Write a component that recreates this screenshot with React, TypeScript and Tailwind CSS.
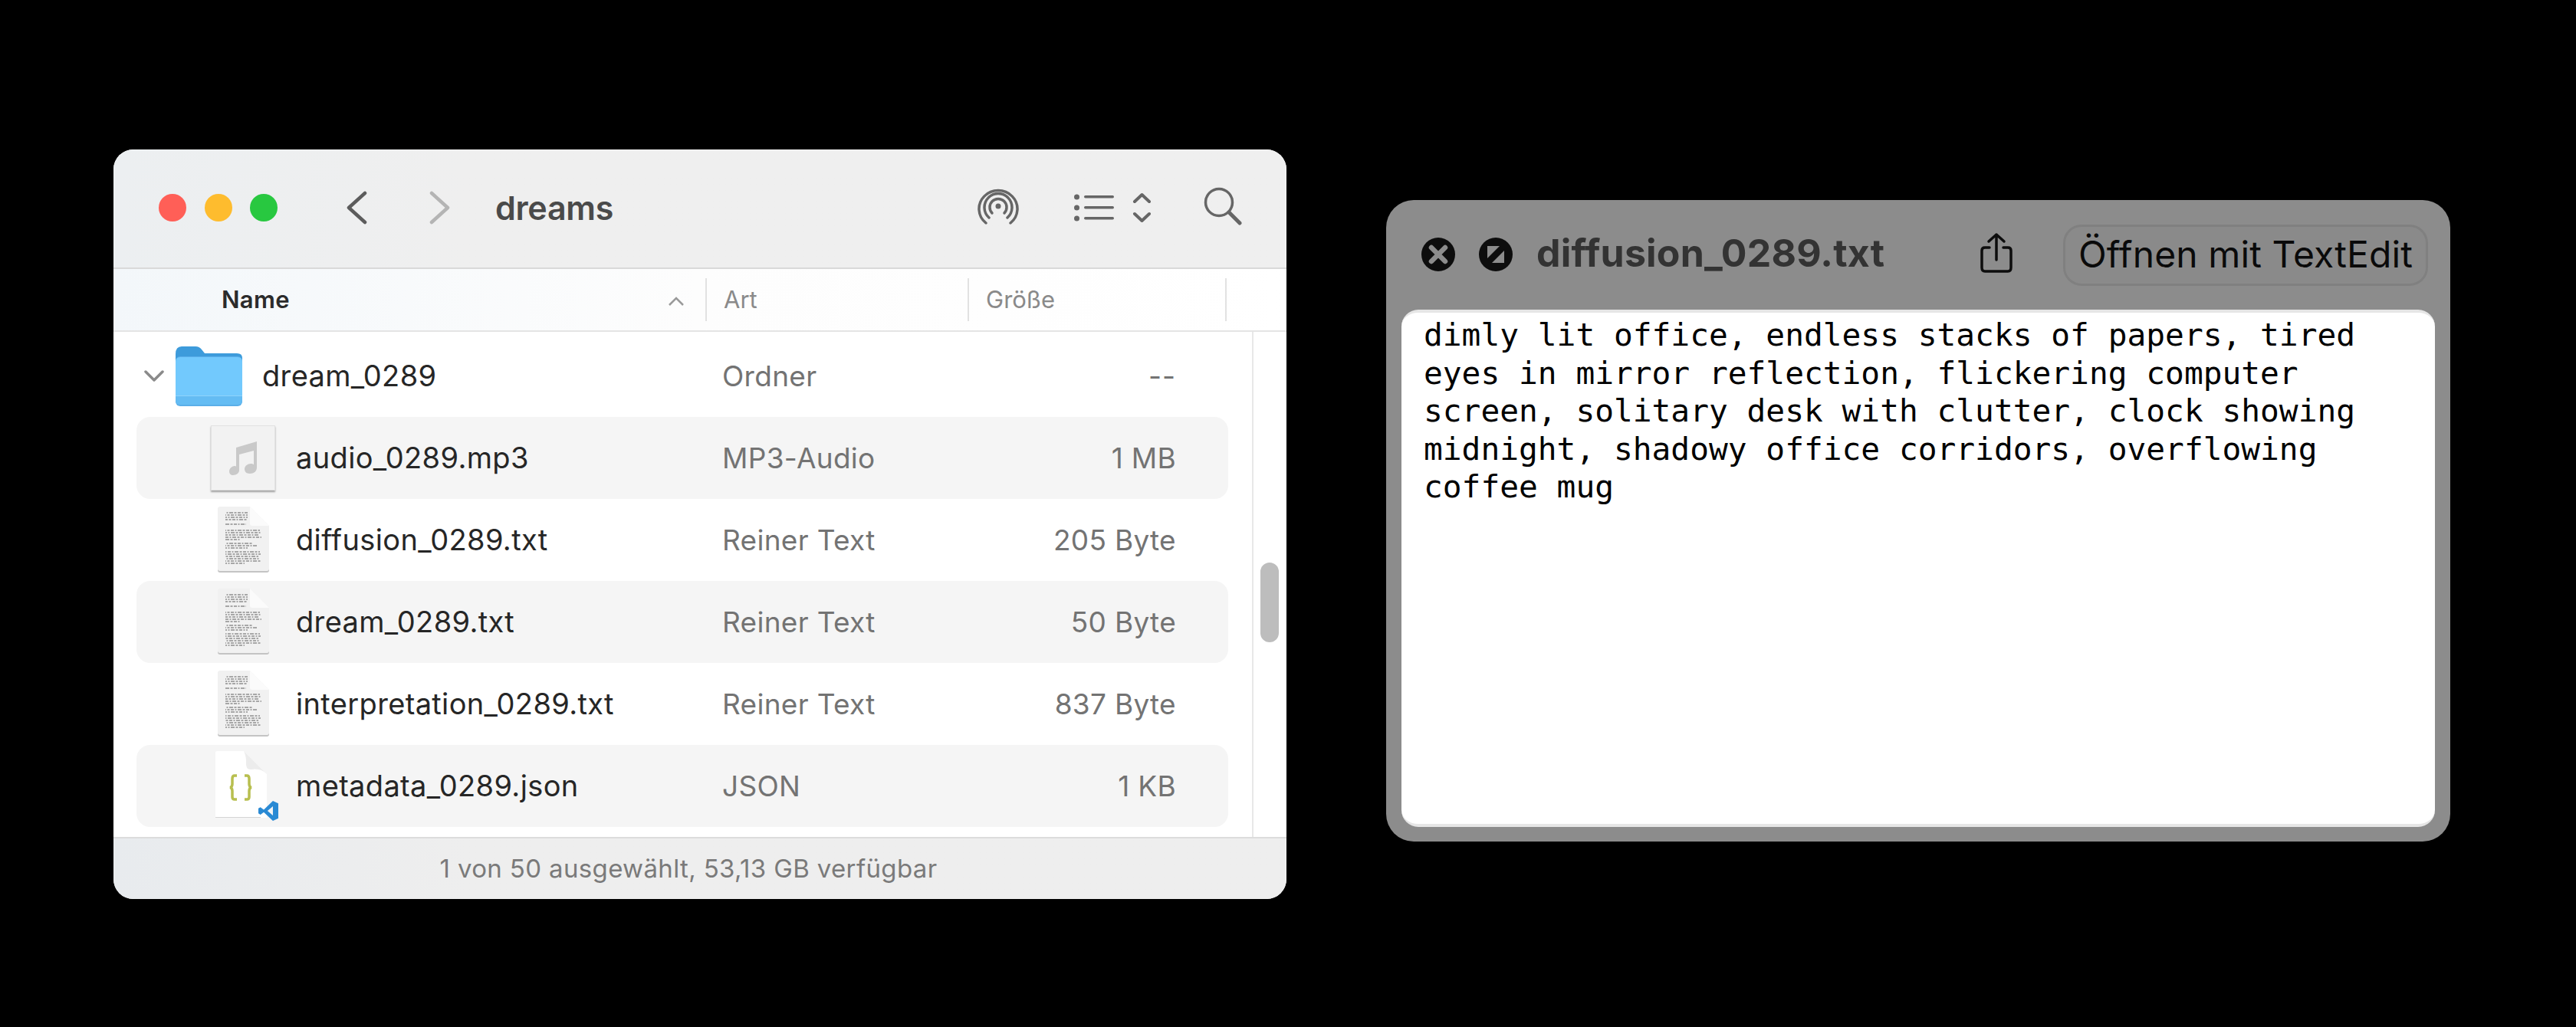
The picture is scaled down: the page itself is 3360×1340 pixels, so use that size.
import React from "react";

const rows = [
  { name: "audio_0289.mp3", kind: "MP3-Audio", size: "1 MB", icon: "audio", striped: true },
  { name: "diffusion_0289.txt", kind: "Reiner Text", size: "205 Byte", icon: "text", striped: false },
  { name: "dream_0289.txt", kind: "Reiner Text", size: "50 Byte", icon: "text", striped: true },
  { name: "interpretation_0289.txt", kind: "Reiner Text", size: "837 Byte", icon: "text", striped: false },
  { name: "metadata_0289.json", kind: "JSON", size: "1 KB", icon: "json", striped: true },
];

const docLines = [
  [8, 11, 40], [11, 11, 40], [14, 11, 40], [17, 11, 40], [23, 11, 38],
  [31, 11, 56], [34, 11, 58], [37, 11, 55], [40, 11, 58], [43, 11, 30],
  [48, 11, 46], [51, 11, 52], [54, 11, 40], [59, 11, 56], [62, 11, 57],
  [65, 11, 54], [68, 11, 56], [71, 11, 57], [74, 11, 36],
];

function FolderIcon() {
  return (
    <svg width="87" height="78" viewBox="0 0 87 78" className="shrink-0">
      <path d="M0 10Q0 0 8 0H26Q31 0 34 4L38 9H80Q87 9 87 15V30H0Z" fill="#3d9bdb" />
      <rect x="0" y="13" width="87" height="65" rx="6" fill="#5aaee8" />
      <path d="M0 20Q0 14 6 14H81Q87 14 87 20V64H0Z" fill="#72c9fd" />
      <rect x="0" y="64" width="87" height="1.5" fill="#8ed3fb" />
      <path d="M0 65H87V70Q87 76 81 76H6Q0 76 0 70Z" fill="#64bcf3" />
    </svg>
  );
}

function AudioIcon() {
  return (
    <div className="w-[84px] h-[85px] shrink-0 flex items-center justify-center bg-[#f2f2f2] border border-[#e2e2e2] shadow-[0_2px_2px_rgba(0,0,0,0.35)]">
      <svg width="36" height="44" viewBox="0 0 36 44" fill="#c9c9c9">
        <path d="M9 8L36 0V34C36 39 32 42 27 42C22 42 20 39 20 36C20 32 24 29 28 29C30 29 31 29.500 32 30V12L13 17V38C13 41 9 44 5 44C2 44 0 42 0 39C0 35 4 32 7 32C8 32 9 32.300 9 33Z" />
      </svg>
    </div>
  );
}

function TextIcon() {
  return (
    <svg width="68" height="87" viewBox="0 0 68 87" className="shrink-0">
      <path d="M1 4Q1 2 4 2H43L68 27V82Q68 85 65 85H4Q1 85 1 82Z" fill="#c4c4c4" transform="translate(0 1)" />
      <path d="M1 3Q1 0 4 0H43L68 25V81Q68 84 65 84H4Q1 84 1 81Z" fill="#f1f1f1" />
      {docLines.map(([y, x1, x2]) => (
        <line
          key={y}
          x1={x1}
          x2={x2}
          y1={y}
          y2={y}
          stroke="#8f8f8f"
          strokeWidth="1.500"
          strokeDasharray="4 1.500 2 1.500 5 1.500 3 1.500"
          strokeDashoffset={y * 3}
        />
      ))}
      <path d="M43 0L68 25H46Q43 25 43 22Z" fill="#fbfbfb" />
    </svg>
  );
}

function JsonIcon() {
  return (
    <div className="relative w-[74px] h-[91px] shrink-0">
      <svg width="68" height="88" viewBox="0 0 68 88">
        <path d="M1 2Q1 0 3 0H38L68 30V87H3Q1 87 1 85Z" fill="#ffffff" />
        <path d="M1 86.500H60" stroke="#d4d4d4" strokeWidth="1" />
        <path d="M38 0L68 30Q60 22 48 24Q40 25 41 14Q41 6 38 0Z" fill="#ececec" />
        <path d="M29 32H26Q23 32 23 36V43Q23 47 20 47.500Q23 48 23 52V60Q23 63 26 63H29" fill="none" stroke="#b8bf4f" strokeWidth="3.500" />
        <path d="M39 32H42Q45 32 45 36V43Q45 47 48 47.500Q45 48 45 52V60Q45 63 42 63H39" fill="none" stroke="#b8bf4f" strokeWidth="3.500" />
      </svg>
      <svg width="26" height="26" viewBox="0 0 24 24" className="absolute right-[-9px] bottom-[0px]">
        <path d="M17.500 0L24 3V21L17.500 24L6.500 13.500L2.500 16.500L0 15V9L2.500 7.500L6.500 10.500ZM17.500 6.500L11 12L17.500 17.500Z" fill="#2a8ad4" />
      </svg>
    </div>
  );
}

function ColumnDivider() {
  return <div className="w-[2px] h-[56px] bg-[#e2e2e2] shrink-0" />;
}

function FileRow({ name, kind, size, icon, striped }: (typeof rows)[number]) {
  return (
    <div className={`h-[107px] flex items-center rounded-[18px] ${striped ? "bg-[#f5f5f5]" : ""}`}>
      <div className="flex items-center justify-center w-[84px] ml-[97px] shrink-0">
        {icon === "audio" && <AudioIcon />}
        {icon === "text" && <TextIcon />}
        {icon === "json" && <JsonIcon />}
      </div>
      <span className="ml-[27px] w-[556px] text-[38px] text-[#262626] tracking-[0.35px]">{name}</span>
      <span className="w-[300px] text-[37px] text-[#737373] tracking-[0.3px]">{kind}</span>
      <span className="w-[292px] text-right text-[37px] text-[#737373] tracking-[0.3px]">{size}</span>
    </div>
  );
}

function FinderWindow() {
  return (
    <div className="w-[1530px] h-[978px] shrink-0 rounded-[26px] overflow-hidden bg-white flex flex-col font-['Inter',sans-serif]">
      <div className="h-[156px] shrink-0 bg-linear-to-r from-[#eceff1] via-[#efefef] via-30% to-[#efefef] border-b-2 border-[#d9d9d9] flex items-center pb-[2px]">
        <div className="w-[36px] h-[36px] ml-[59px] rounded-full bg-[#ff5f57]" />
        <div className="w-[36px] h-[36px] ml-[24px] rounded-full bg-[#febc2e]" />
        <div className="w-[36px] h-[36px] ml-[23px] rounded-full bg-[#28c840]" />
        <svg width="28" height="44" viewBox="0 0 28 44" className="ml-[89px]" fill="none" stroke="#5c5c5c" strokeWidth="4.500" strokeLinecap="round" strokeLinejoin="round">
          <path d="M25 3L4 22L25 41" />
        </svg>
        <svg width="28" height="44" viewBox="0 0 28 44" className="ml-[81px]" fill="none" stroke="#b4b4b4" strokeWidth="4.500" strokeLinecap="round" strokeLinejoin="round">
          <path d="M3 3L24 22L3 41" />
        </svg>
        <span className="ml-[58px] w-[157px] text-[43px] font-semibold text-[#4a4a4a] tracking-[-0.3px]">dreams</span>
        <svg width="54" height="50" viewBox="0 0 54 50" className="ml-[472px] mt-[-6px]" fill="none" stroke="#666666" strokeWidth="3.500" strokeLinecap="round">
          <path d="M11 48A25 24 0 1 1 43 48" />
          <path d="M15 41A18 18 0 1 1 39 41" />
          <path d="M19 35A11 11 0 1 1 35 35" />
          <circle cx="27" cy="26" r="3.500" fill="#666666" stroke="none" />
        </svg>
        <svg width="52" height="36" viewBox="0 0 52 36" className="ml-[72px]" fill="#666666">
          <circle cx="3.500" cy="4" r="3.500" />
          <circle cx="3.500" cy="18" r="3.500" />
          <circle cx="3.500" cy="32" r="3.500" />
          <rect x="13" y="2" width="39" height="3.500" rx="1.700" />
          <rect x="13" y="16" width="39" height="3.500" rx="1.700" />
          <rect x="13" y="30" width="39" height="3.500" rx="1.700" />
        </svg>
        <svg width="25" height="40" viewBox="0 0 25 40" className="ml-[24px]" fill="none" stroke="#666666" strokeWidth="4" strokeLinecap="round" strokeLinejoin="round">
          <path d="M3 12L12.500 3L22 12M3 28L12.500 37L22 28" />
        </svg>
        <svg width="50" height="50" viewBox="0 0 50 50" className="ml-[68px] mt-[-4px]" fill="none" stroke="#666666" strokeLinecap="round">
          <circle cx="20" cy="20" r="17.500" strokeWidth="3.500" />
          <path d="M33 33L47 47" strokeWidth="5" />
        </svg>
      </div>
      <div className="h-[82px] shrink-0 bg-linear-to-r from-[#f3f7fa] via-[#fdfdfd] via-50% to-white border-b-2 border-[#e4e4e4] flex items-center">
        <span className="ml-[141px] w-[582px] text-[31px] font-semibold text-[#2b2b2b] tracking-[0.3px]">Name</span>
        <svg width="22" height="14" viewBox="0 0 22 14" className="mt-[4px]" fill="none" stroke="#9a9a9a" strokeWidth="2.500">
          <path d="M2 12L11 3L20 12" />
        </svg>
        <div className="ml-[27px]"><ColumnDivider /></div>
        <span className="ml-[22px] w-[318px] text-[31px] text-[#8a8a8a]">Art</span>
        <ColumnDivider />
        <span className="ml-[22px] w-[312px] text-[31px] text-[#8a8a8a]">Größe</span>
        <ColumnDivider />
      </div>
      <div className="flex-1 flex min-h-0">
        <div className="w-[1487px] shrink-0 border-r-2 border-[#e8e8e8] pl-[30px] pr-[31px] pt-[4px]">
          <div className="h-[107px] flex items-center">
            <svg width="26" height="16" viewBox="0 0 26 16" className="ml-[10px]" fill="none" stroke="#8a8a8a" strokeWidth="3.500" strokeLinecap="round" strokeLinejoin="round">
              <path d="M2 2L13 13L24 2" />
            </svg>
            <div className="ml-[15px]"><FolderIcon /></div>
            <span className="ml-[26px] w-[600px] text-[38px] text-[#262626] tracking-[0.35px]">dream_0289</span>
            <span className="w-[300px] text-[37px] text-[#737373] tracking-[0.3px]">Ordner</span>
            <span className="w-[292px] text-right text-[37px] text-[#737373] tracking-[1px]">--</span>
          </div>
          {rows.map((row) => (
            <FileRow key={row.name} {...row} />
          ))}
        </div>
        <div className="flex-1 pl-[9px] pt-[301px]">
          <div className="w-[24px] h-[104px] rounded-full bg-[#bdbdbd]" />
        </div>
      </div>
      <div className="h-[81px] shrink-0 bg-linear-to-r from-[#e8ebee] via-[#eeeeee] via-30% to-[#eeeeee] border-t-2 border-[#dcdcdc] flex items-center justify-center pr-[30px]">
        <span className="text-[33px] text-[#7a7a7a] tracking-[0.35px]">1 von 50 ausgewählt, 53,13 GB verfügbar</span>
      </div>
    </div>
  );
}

function QuickLookWindow() {
  return (
    <div className="w-[1388px] h-[837px] shrink-0 mt-[66px] ml-[130px] rounded-[36px] bg-[#8c8c8c] flex flex-col font-['Inter',sans-serif]">
      <div className="h-[143px] shrink-0 flex items-center">
        <svg width="44" height="44" viewBox="0 0 44 44" className="ml-[46px] mt-[-1px]">
          <circle cx="22" cy="22" r="22" fill="#0d0d0d" />
          <path d="M13 13L31 31M31 13L13 31" stroke="#8c8c8c" strokeWidth="6.500" strokeLinecap="round" />
        </svg>
        <svg width="44" height="44" viewBox="0 0 44 44" className="ml-[31px] mt-[-1px]">
          <circle cx="22" cy="22" r="22" fill="#0d0d0d" />
          <path d="M11 11H27L11 27ZM33 33H17L33 17Z" fill="#8c8c8c" />
        </svg>
        <span className="ml-[31px] w-[578px] text-[50px] font-bold text-[#333333] tracking-[0.2px] mt-[-4px]">diffusion_0289.txt</span>
        <svg width="44" height="54" viewBox="0 0 44 54" className="mt-[-6px]" fill="none" stroke="#0d0d0d" strokeWidth="3.500" strokeLinecap="round" strokeLinejoin="round">
          <path d="M13 20H7Q3 20 3 24V46Q3 51 7 51H37Q41 51 41 46V24Q41 20 37 20H31" />
          <path d="M22 36V3M12 12L22 3L32 12" />
        </svg>
        <div className="ml-[65px] w-[476px] h-[80px] rounded-[24px] border-[3px] border-[#808080] bg-[#8a8a8a] flex items-center justify-center">
          <span className="text-[48px] text-[#0a0a0a] tracking-[0.1px] whitespace-nowrap mt-[-2px]">Öffnen mit TextEdit</span>
        </div>
      </div>
      <div className="mx-[20px] h-[675px] rounded-[22px] bg-white border-y-4 border-[#e6e6e6] pl-[29px] pt-[5px]">
        <pre className="font-['DejaVu_Sans_Mono',monospace] text-[41.200px] leading-[49.500px] text-black">{`dimly lit office, endless stacks of papers, tired
eyes in mirror reflection, flickering computer
screen, solitary desk with clutter, clock showing
midnight, shadowy office corridors, overflowing
coffee mug`}</pre>
      </div>
    </div>
  );
}

export default function App() {
  return (
    <div className="w-[3360px] h-[1340px] bg-black pl-[148px] pt-[195px] flex items-start">
      <FinderWindow />
      <QuickLookWindow />
    </div>
  );
}
